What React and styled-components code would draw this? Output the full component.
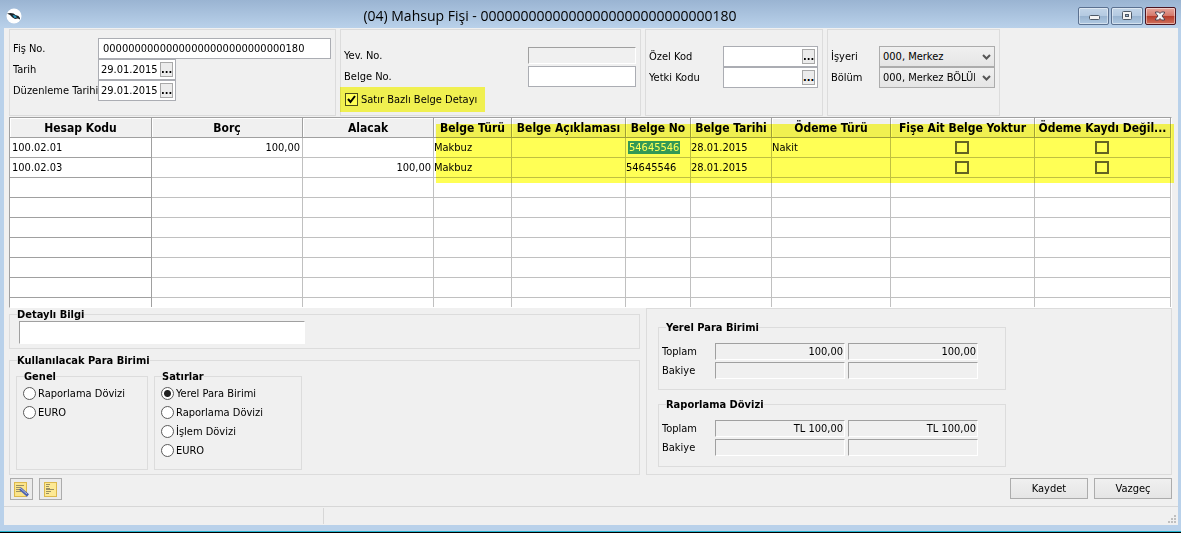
import styled, { createGlobalStyle, css } from "styled-components";

const GlobalStyle = createGlobalStyle`
  * {
    box-sizing: border-box;
  }
  body {
    margin: 0;
    font-family: "DejaVu Sans Condensed", "Noto Sans", sans-serif;
    font-size: 11px;
    line-height: 13px;
    color: #000;
  }
  input, select, button {
    font: inherit;
    color: inherit;
    margin: 0;
    border-radius: 0;
  }
`;

const Window = styled.div`
  display: flex;
  flex-direction: column;
  height: 100vh;
  min-height: 480px;
  padding: 0 3px 7px 4px;
  background: linear-gradient(#9ab4d2, #b9d1ea 28px, #b9d1ea);
  border-bottom: 1px solid #000;
  box-shadow: inset 0 -1px 0 #25b4cf;
`;

const TitleBar = styled.header`
  display: grid;
  grid-template-columns: 18px 1fr 100px;
  align-items: center;
  flex: none;
  height: 28px;
`;

const Title = styled.h1`
  margin: 0;
  padding-top: 4px;
  font-family: "Open Sans", "Noto Sans", sans-serif;
  font-size: 14px;
  font-weight: 400;
  line-height: 20px;
  text-align: center;
  white-space: nowrap;
`;

const AppLogo = styled.svg`
  margin: 4px 0 0 2px;
`;

const Captions = styled.div`
  display: flex;
  justify-content: flex-end;
  gap: 2px;
  padding: 3px 2px 0 0;
`;

const CaptionButton = styled.button`
  display: flex;
  align-items: center;
  justify-content: center;
  width: 32px;
  height: 18px;
  padding: 0;
  border: 1px solid ${(props) => (props.$close ? "#4b1420" : "#5b7190")};
  border-radius: 2px;
  box-shadow: inset 0 0 0 1px rgba(255, 255, 255, 0.45);
  background: ${(props) =>
    props.$close
      ? "linear-gradient(#e6a69c, #d5796b 48%, #b63a28 50%, #d0705c)"
      : "linear-gradient(#c3d5e8, #b4cae1 48%, #98b3cf 50%, #b0c9e2)"};
`;

const Body = styled.main`
  display: flex;
  flex-direction: column;
  flex: 1;
  min-height: 0;
  padding-top: 1px;
  background: #f0f0f0;
`;

const HeaderPanels = styled.div`
  display: flex;
  gap: 4px;
  flex: none;
  margin: 0 5px 1px;
`;

const Panel = styled.section`
  position: relative;
  width: ${(props) => props.$width}px;
  height: 87px;
  padding: ${(props) => props.$top}px 4px 0 3px;
  border: 1px solid #dcdcdc;
`;

const FormRow = styled.div`
  display: grid;
  grid-template-columns: ${(props) => props.$label}px 1fr;
  align-items: center;
  height: 21px;
  white-space: nowrap;
`;

const sunken = css`
  border: 1px solid #fff;
  border-top-color: #a0a0a0;
  border-left-color: #a0a0a0;
`;

const TextField = styled.input`
  width: 100%;
  height: 21px;
  padding: 0 4px;
  border: 1px solid #abadb3;
  background: #fff;
`;

const ReadOnlyField = styled.input`
  ${sunken}
  width: 100%;
  height: 17px;
  padding: 0 1px;
  background: #f0f0f0;
  text-align: right;
`;

const PickerBox = styled.div`
  display: flex;
  align-items: center;
  width: ${(props) => props.$width}px;
  height: 21px;
  padding: 0 2px;
  border: 1px solid #abadb3;
  background: #fff;
`;

const PickerInput = styled.input`
  flex: 1;
  min-width: 0;
  padding: 0;
  border: none;
  background: none;
`;

const PickerButton = styled.button`
  width: 13px;
  height: 15px;
  padding: 0;
  border: 1px solid #a8a8a8;
  background: #ececec;
  font-weight: 700;
  line-height: 11px;
`;

const SelectBox = styled.div`
  position: relative;
  height: 21px;
`;

const Select = styled.select`
  appearance: none;
  width: 100%;
  height: 21px;
  padding: 0 19px 0 3px;
  border: 1px solid #acacac;
  background: linear-gradient(#f0f0f0, #e5e5e5);
`;

const SelectArrow = styled.svg`
  position: absolute;
  top: 8px;
  right: 4px;
  pointer-events: none;
`;

const CheckLabel = styled.label`
  display: flex;
  align-items: center;
  gap: 3px;
  height: 24px;
  padding-left: 1px;
`;

const Check = styled.input`
  appearance: none;
  width: 13px;
  height: 13px;
  border: 1px solid #4c4c4c;
  background: #fff;
  &:checked {
    background: #fff
      url("data:image/svg+xml,%3Csvg xmlns='http://www.w3.org/2000/svg' viewBox='0 0 11 11'%3E%3Cpath d='M2 5l2.5 3L9 2' fill='none' stroke='%23000' stroke-width='2'/%3E%3C/svg%3E");
  }
`;

// marker pen laid over the controls
const Marker = styled.div`
  position: absolute;
  top: ${(props) => props.$top}px;
  left: ${(props) => props.$left}px;
  right: ${(props) => props.$right}px;
  height: ${(props) => props.$height}px;
  background: #ffff55;
  mix-blend-mode: multiply;
  pointer-events: none;
`;

const GridArea = styled.div`
  position: relative;
  flex: 1;
  min-height: 0;
  margin: 0 6px 0 5px;
`;

const GridFrame = styled.div`
  height: 100%;
  overflow: hidden;
  ${sunken}
  background: #fff;
`;

const Table = styled.table`
  width: 100%;
  table-layout: fixed;
  border-collapse: separate;
  border-spacing: 0;
`;

const Th = styled.th`
  height: 20px;
  padding: 0 3px;
  border-right: 1px solid #a0a0a0;
  border-bottom: 1px solid #a0a0a0;
  background: #f0f0f0;
  box-shadow: inset 1px 1px 0 #fff;
  font-size: 12px;
  font-weight: 700;
  line-height: 16px;
  white-space: nowrap;
  overflow: hidden;
  text-overflow: ellipsis;
`;

const Td = styled.td`
  height: 20px;
  padding: 0 2px 0 ${(props) => (props.$fixed ? "2px" : "0")};
  border-right: 1px solid ${(props) => (props.$fixed ? "#a0a0a0" : "#c0c0c0")};
  border-bottom: 1px solid ${(props) => (props.$fixed ? "#a0a0a0" : "#c0c0c0")};
  text-align: ${(props) => props.$align || "left"};
  white-space: nowrap;
`;

const CellCheck = styled.input`
  appearance: none;
  display: block;
  width: 14px;
  height: 13px;
  margin: 0 auto;
  border: 2px solid #646464;
  background: #fff;
`;

const Selected = styled.span`
  margin-left: 2px;
  padding: 0 1px;
  background: #3399ff;
  color: #fff;
`;

const Lower = styled.div`
  display: grid;
  grid-template-columns: 631px 1fr;
  gap: 6px;
  flex: none;
  margin: 0 6px 0 5px;
`;

const LeftColumn = styled.div`
  display: flex;
  flex-direction: column;
  gap: 5px;
`;

const Group = styled.fieldset`
  min-width: 0;
  width: ${(props) => (props.$width ? props.$width + "px" : "auto")};
  margin: 0;
  padding: ${(props) => props.$pad || "0"};
  border: 1px solid #dcdcdc;
`;

const Legend = styled.legend`
  margin-left: ${(props) => props.$indent || 0}px;
  padding: 0;
  font-weight: 700;
  line-height: 13px;
`;

const DetailInput = styled.input`
  ${sunken}
  display: block;
  width: 286px;
  height: 23px;
  background: #fff;
`;

const GroupRow = styled.div`
  display: flex;
  gap: 6px;
`;

const RadioLabel = styled.label`
  display: flex;
  align-items: center;
  gap: 2px;
  height: 19px;
`;

const Radio = styled.input`
  appearance: none;
  width: 13px;
  height: 13px;
  border: 1px solid #5a5a5a;
  && {
    border-radius: 50%;
  }
  background: #fff;
  &:checked {
    background: radial-gradient(#222 3px, #fff 4px);
  }
`;

const TotalsPanel = styled.section`
  display: flex;
  flex-direction: column;
  gap: 8px;
  padding: 12px 11px 0;
  border: 1px solid #dcdcdc;
`;

const TotalsRow = styled.div`
  display: grid;
  grid-template-columns: 50px 130px 130px;
  gap: 3px;
  align-items: center;
  height: 17px;
  & + & {
    margin-top: 2px;
  }
`;

const Actions = styled.div`
  display: flex;
  align-items: flex-start;
  flex: none;
  gap: 6px;
  margin: 3px 6px 6px;
`;

const IconButton = styled.button`
  display: flex;
  align-items: center;
  justify-content: center;
  width: 23px;
  height: 22px;
  padding: 0;
  border: 1px solid #acacac;
  background: #ebebeb;
`;

const PushButton = styled.button`
  width: 78px;
  height: 21px;
  padding: 0;
  border: 1px solid #acacac;
  background: linear-gradient(#f0f0f0, #e5e5e5);
`;

const Spacer = styled.div`
  flex: 1;
`;

const StatusBar = styled.footer`
  display: flex;
  justify-content: space-between;
  align-items: flex-end;
  flex: none;
  height: 19px;
  padding: 1px 1px 1px 0;
  border-top: 1px solid #d7d7d7;
`;

const StatusCell = styled.div`
  width: 320px;
  height: 16px;
  border-right: 1px solid #d7d7d7;
`;

const columns = [
  { title: "Hesap Kodu", width: 142 },
  { title: "Borç", width: 151 },
  { title: "Alacak", width: 131 },
  { title: "Belge Türü", width: 78 },
  { title: "Belge Açıklaması", width: 114 },
  { title: "Belge No", width: 65 },
  { title: "Belge Tarihi", width: 81 },
  { title: "Ödeme Türü", width: 119 },
  { title: "Fişe Ait Belge Yoktur", width: 144 },
  { title: "Ödeme Kaydı Değil..." },
];

const entries = [
  {
    account: "100.02.01",
    debit: "100,00",
    type: "Makbuz",
    no: "54645546",
    date: "28.01.2015",
    payment: "Nakit",
    selected: true,
  },
  {
    account: "100.02.03",
    credit: "100,00",
    type: "Makbuz",
    no: "54645546",
    date: "28.01.2015",
  },
];

const emptyRows = [1, 2, 3, 4, 5, 6, 7];

const Picker = ({ id, value, width, label }) => (
  <PickerBox $width={width}>
    <PickerInput id={id} defaultValue={value} />
    <PickerButton aria-label={label}>...</PickerButton>
  </PickerBox>
);

const Combo = ({ id, value }) => (
  <SelectBox>
    <Select id={id} defaultValue={value}>
      <option>{value}</option>
    </Select>
    <SelectArrow width="9" height="7" viewBox="0 0 9 7">
      <path d="M1 1l3.5 3.5L8 1" fill="none" stroke="#555" strokeWidth="2" />
    </SelectArrow>
  </SelectBox>
);

const RadioOption = ({ name, label, checked }) => (
  <RadioLabel>
    <Radio type="radio" name={name} defaultChecked={checked} />
    {label}
  </RadioLabel>
);

const Totals = ({ title, amount }) => (
  <Group $width={348} $pad="9px 3px 10px">
    <Legend $indent={4}>{title}</Legend>
    {[
      ["Toplam", amount],
      ["Bakiye", ""],
    ].map(([label, value]) => (
      <TotalsRow key={label}>
        <span>{label}</span>
        <ReadOnlyField readOnly value={value} aria-label={`${title} ${label} Borç`} />
        <ReadOnlyField readOnly value={value} aria-label={`${title} ${label} Alacak`} />
      </TotalsRow>
    ))}
  </Group>
);

const App = () => {
  return (
    <Window>
      <GlobalStyle />
      <TitleBar>
        <AppLogo width="16" height="16" viewBox="0 0 16 16">
          <circle cx="8" cy="8" r="7.5" fill="#fff" />
          <path d="M1 5.500l3.500-.5 3 .5 2 1.500 3 1 1.500 2v1.500l-2-1-3 .5L6.500 9.500 4 7z" fill="#1b2328" />
          <path d="M6.500 7l3 .5 1.500 2-2.500.5z" fill="#2a9cc4" />
        </AppLogo>
        <Title>(04) Mahsup Fişi - 00000000000000000000000000000180</Title>
        <Captions>
          <CaptionButton aria-label="Minimize">
            <svg width="12" height="12" viewBox="0 0 12 12">
              <rect x="1.5" y="5.5" width="10" height="4" rx="1" fill="#f4f4f4" stroke="#4e5a68" />
            </svg>
          </CaptionButton>
          <CaptionButton aria-label="Maximize">
            <svg width="12" height="12" viewBox="0 0 12 12">
              <rect x="1.5" y="1.5" width="9" height="8" rx="1" fill="#f4f4f4" stroke="#4e5a68" />
              <rect x="4.5" y="4.5" width="3" height="2" fill="#9fb8d2" stroke="#4e5a68" />
            </svg>
          </CaptionButton>
          <CaptionButton $close aria-label="Close">
            <svg width="12" height="12" viewBox="0 0 12 12">
              <path d="M1.500 2h3L6 3.500 7.500 2h3v1L8 6l2.500 3v1h-3L6 8.500 4.500 10h-3V9L4 6 1.500 3z" fill="#f6f6f6" stroke="#4e4450" />
            </svg>
          </CaptionButton>
        </Captions>
      </TitleBar>
      <Body>
        <HeaderPanels>
          <Panel $width={327} $top={8}>
            <FormRow $label={85}>
              <label htmlFor="voucher">Fiş No.</label>
              <TextField id="voucher" defaultValue="00000000000000000000000000000180" />
            </FormRow>
            <FormRow $label={85}>
              <label htmlFor="date">Tarih</label>
              <Picker id="date" value="29.01.2015" width={78} label="Tarih seç" />
            </FormRow>
            <FormRow $label={85}>
              <label htmlFor="issued">Düzenleme Tarihi</label>
              <Picker id="issued" value="29.01.2015" width={78} label="Düzenleme tarihi seç" />
            </FormRow>
          </Panel>
          <Panel $width={301} $top={15}>
            <FormRow $label={184}>
              <label htmlFor="journal">Yev. No.</label>
              <ReadOnlyField id="journal" readOnly value="" />
            </FormRow>
            <FormRow $label={184}>
              <label htmlFor="document">Belge No.</label>
              <TextField id="document" />
            </FormRow>
            <CheckLabel>
              <Check type="checkbox" defaultChecked />
              Satır Bazlı Belge Detayı
            </CheckLabel>
            <Marker $top={57} $left={-1} $right={155} $height={25} />
          </Panel>
          <Panel $width={178} $top={16}>
            <FormRow $label={74}>
              <label htmlFor="special">Özel Kod</label>
              <Picker id="special" width={95} label="Özel kod seç" />
            </FormRow>
            <FormRow $label={74}>
              <label htmlFor="auth">Yetki Kodu</label>
              <Picker id="auth" width={95} label="Yetki kodu seç" />
            </FormRow>
          </Panel>
          <Panel $width={173} $top={16}>
            <FormRow $label={48}>
              <label htmlFor="workplace">İşyeri</label>
              <Combo id="workplace" value="000, Merkez" />
            </FormRow>
            <FormRow $label={48}>
              <label htmlFor="department">Bölüm</label>
              <Combo id="department" value="000, Merkez BÖLÜMÜ" />
            </FormRow>
          </Panel>
        </HeaderPanels>
        <GridArea>
          <GridFrame>
            <Table>
              <colgroup>
                {columns.map((column) => (
                  <col key={column.title} width={column.width} />
                ))}
              </colgroup>
              <thead>
                <tr>
                  {columns.map((column) => (
                    <Th key={column.title}>{column.title}</Th>
                  ))}
                </tr>
              </thead>
              <tbody>
                {entries.map((entry) => (
                  <tr key={entry.account}>
                    <Td $fixed>{entry.account}</Td>
                    <Td $align="right">{entry.debit}</Td>
                    <Td $align="right">{entry.credit}</Td>
                    <Td>{entry.type}</Td>
                    <Td />
                    <Td>{entry.selected ? <Selected>{entry.no}</Selected> : entry.no}</Td>
                    <Td>{entry.date}</Td>
                    <Td>{entry.payment}</Td>
                    <Td>
                      <CellCheck type="checkbox" aria-label="Fişe Ait Belge Yoktur" />
                    </Td>
                    <Td>
                      <CellCheck type="checkbox" aria-label="Ödeme Kaydı Değil" />
                    </Td>
                  </tr>
                ))}
                {emptyRows.map((row) => (
                  <tr key={row}>
                    {columns.map((column, index) => (
                      <Td key={column.title} $fixed={index === 0} />
                    ))}
                  </tr>
                ))}
              </tbody>
            </Table>
          </GridFrame>
          <Marker $top={7} $left={427} $right={-2} $height={59} />
        </GridArea>
        <Lower>
          <LeftColumn>
            <Group $pad="0 9px 4px">
              <Legend $indent={-2}>Detaylı Bilgi</Legend>
              <DetailInput aria-label="Detaylı Bilgi" />
            </Group>
            <Group $pad="3px 6px 4px">
              <Legend $indent={1}>Kullanılacak Para Birimi</Legend>
              <GroupRow>
                <Group $width={132} $pad="1px 6px 9px">
                  <Legend $indent={1}>Genel</Legend>
                  <RadioOption name="general" label="Raporlama Dövizi" />
                  <RadioOption name="general" label="EURO" />
                </Group>
                <Group $width={148} $pad="1px 6px 9px">
                  <Legend $indent={1}>Satırlar</Legend>
                  <RadioOption name="lines" label="Yerel Para Birimi" checked />
                  <RadioOption name="lines" label="Raporlama Dövizi" />
                  <RadioOption name="lines" label="İşlem Dövizi" />
                  <RadioOption name="lines" label="EURO" />
                </Group>
              </GroupRow>
            </Group>
          </LeftColumn>
          <TotalsPanel>
            <Totals title="Yerel Para Birimi" amount="100,00" />
            <Totals title="Raporlama Dövizi" amount="TL 100,00" />
          </TotalsPanel>
        </Lower>
        <Actions>
          <IconButton aria-label="Fişi düzenle">
            <svg width="17" height="17" viewBox="0 0 17 17">
              <rect x="1.5" y="1.5" width="12" height="14" fill="#fbe48a" stroke="#dcb84c" />
              <path d="M3 4.500h8M3 6.500h5M3 8.500h4M3 10.500h5" stroke="#9a8f62" />
              <path d="M7 7.500l8 7" stroke="#4a5fae" strokeWidth="3" />
              <path d="M7 7l7 6" stroke="#a9b8e0" />
            </svg>
          </IconButton>
          <IconButton aria-label="Fiş notları">
            <svg width="17" height="17" viewBox="0 0 17 17">
              <rect x="2.5" y="1.5" width="12" height="14" fill="#fde994" stroke="#dcb84c" />
              <path d="M4 3.500h4M4 5.500h3M4 7.500h4M4 8.500h8M4 10.500h5M4 12.500h3" stroke="#9a8f62" />
            </svg>
          </IconButton>
          <Spacer />
          <PushButton>Kaydet</PushButton>
          <PushButton>Vazgeç</PushButton>
        </Actions>
        <StatusBar>
          <StatusCell />
          <svg width="9" height="9" viewBox="0 0 9 9" fill="#bfbfbf">
            <path d="M6 0h2v2H6zM3 3h2v2H3zM6 3h2v2H6zM0 6h2v2H0zM3 6h2v2H3zM6 6h2v2H6z" />
          </svg>
        </StatusBar>
      </Body>
    </Window>
  );
};

export default App;
